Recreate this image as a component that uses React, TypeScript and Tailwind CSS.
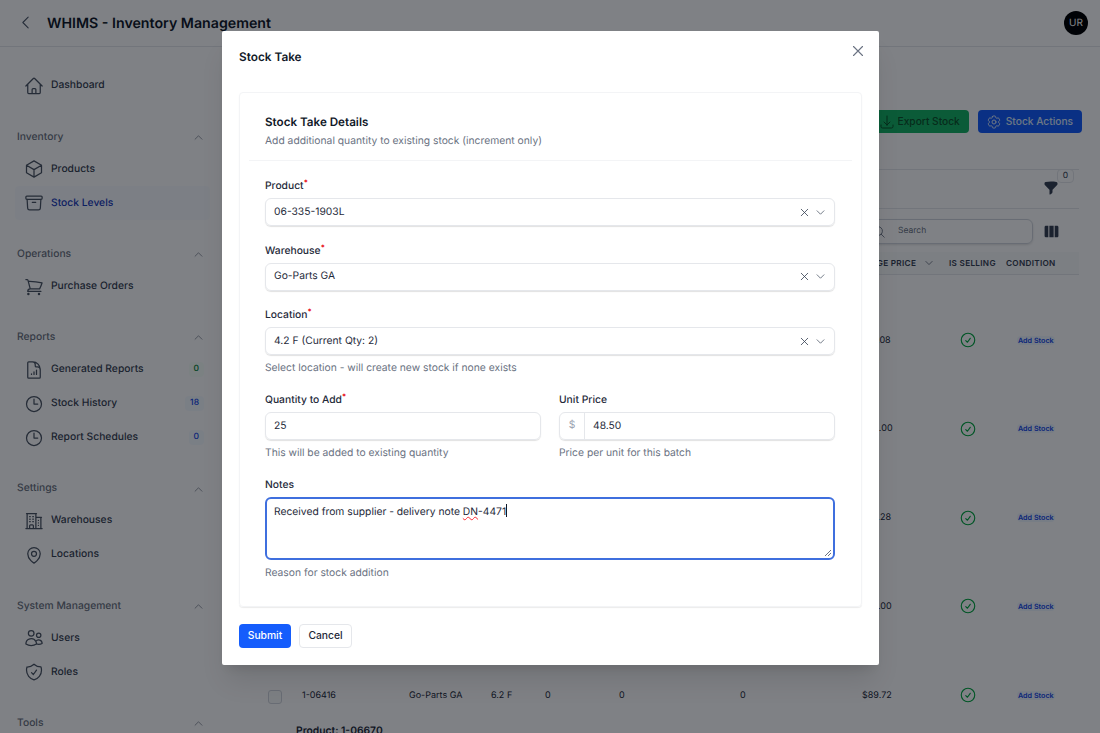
import {
  HiFunnel,
  HiOutlineArchiveBox,
  HiOutlineArrowDownTray,
  HiOutlineBuildingOffice2,
  HiOutlineCheckCircle,
  HiOutlineChevronDown,
  HiOutlineChevronLeft,
  HiOutlineChevronUp,
  HiOutlineClock,
  HiOutlineCog6Tooth,
  HiOutlineCube,
  HiOutlineDocumentChartBar,
  HiOutlineHome,
  HiOutlineMagnifyingGlass,
  HiOutlineMapPin,
  HiOutlineShieldCheck,
  HiOutlineShoppingCart,
  HiOutlineUsers,
  HiOutlineXMark,
  HiViewColumns,
} from "react-icons/hi2";
import type { IconType } from "react-icons";

type NavItem = { label: string; icon: IconType; badge?: string; badgeClass?: string; active?: boolean };

const sections: { title: string; items: NavItem[] }[] = [
  {
    title: "Inventory",
    items: [
      { label: "Products", icon: HiOutlineCube },
      { label: "Stock Levels", icon: HiOutlineArchiveBox, active: true },
    ],
  },
  { title: "Operations", items: [{ label: "Purchase Orders", icon: HiOutlineShoppingCart }] },
  {
    title: "Reports",
    items: [
      { label: "Generated Reports", icon: HiOutlineDocumentChartBar, badge: "0", badgeClass: "bg-green-50/60 text-green-700" },
      { label: "Stock History", icon: HiOutlineClock, badge: "18", badgeClass: "bg-blue-50/60 text-blue-700" },
      { label: "Report Schedules", icon: HiOutlineClock, badge: "0", badgeClass: "bg-blue-50/60 text-blue-700" },
    ],
  },
  {
    title: "Settings",
    items: [
      { label: "Warehouses", icon: HiOutlineBuildingOffice2 },
      { label: "Locations", icon: HiOutlineMapPin },
    ],
  },
  {
    title: "System Management",
    items: [
      { label: "Users", icon: HiOutlineUsers },
      { label: "Roles", icon: HiOutlineShieldCheck },
    ],
  },
  { title: "Tools", items: [] },
];

const rows = [
  { sku: "1-06120", location: "3.1 B", price: "$41.08" },
  { sku: "1-06233", location: "4.2 F", price: "$62.00" },
  { sku: "1-06301", location: "5.4 C", price: "$37.28" },
  { sku: "1-06388", location: "2.7 A", price: "$75.00" },
  { sku: "1-06416", location: "6.2 F", price: "$89.72" },
];

const tableCols = "grid grid-cols-[44px_107px_82px_54px_74px_121px_122px_97px_59px_1fr]";

function Sidebar() {
  return (
    <aside className="w-[222px] shrink-0 px-[17px] pt-[22px]">
      <a className="flex h-[34px] items-center gap-[7px] pl-[7px] text-[#374151]">
        <HiOutlineHome className="h-5 w-5 text-[#4b5563]" />
        <span className="text-[10.3px] font-medium">Dashboard</span>
      </a>
      {sections.map((section) => (
        <div key={section.title} className="mt-[19.25px]">
          <div className="flex h-[30px] items-center justify-between pr-[1.5px] text-[10.3px] font-medium text-[#6b7280]">
            {section.title}
            <HiOutlineChevronUp className="h-[11px] w-[11px]" />
          </div>
          {section.items.map((item) => (
            <a
              key={item.label}
              className={
                item.active
                  ? "-mx-[2px] -mr-[5px] flex h-[34px] items-center gap-[7px] rounded bg-blue-50/40 pl-[9px] text-blue-800"
                  : "flex h-[34px] items-center gap-[7px] pl-[7px] text-[#374151]"
              }
            >
              <item.icon className="h-5 w-5 text-[#4b5563]" />
              <span className="text-[10.3px] font-medium">{item.label}</span>
              {item.badge && (
                <span className={`ml-auto mr-[1px] rounded px-[5px] py-[1px] text-[8.5px] font-medium ${item.badgeClass}`}>
                  {item.badge}
                </span>
              )}
            </a>
          ))}
        </div>
      ))}
    </aside>
  );
}

function StockTable() {
  return (
    <main className="min-w-0 flex-1 pl-[36px] pr-[18px]">
      <div className="flex h-[122px] items-start justify-end gap-[9px] pt-[63px]">
        <button className="flex h-[23px] items-center gap-[3px] rounded bg-[#16b364] pl-2 pr-[9px] text-[10.2px] font-medium text-green-900">
          <HiOutlineArrowDownTray className="h-4 w-4" />
          Export Stock
        </button>
        <button className="flex h-[23px] items-center gap-1 rounded bg-blue-600 pl-2 pr-[9px] text-[10.2px] font-medium text-blue-100">
          <HiOutlineCog6Tooth className="h-4 w-4" />
          Stock Actions
        </button>
      </div>
      <div className="mr-[3px] border-t border-gray-200">
        <div className="flex h-[39px] items-center justify-end border-b border-gray-200 pb-[3px] pr-5">
          <div className="relative">
            <HiFunnel className="h-4 w-4 text-gray-700" />
            <span className="absolute -right-[15px] -top-[11px] rounded border border-gray-200 px-[5px] text-[8.5px] text-gray-700">
              0
            </span>
          </div>
        </div>
        <div className="flex h-[43px] items-center justify-end gap-[10px] pr-[19px] pt-[2px]">
          <div className="flex h-[25px] w-[170px] items-center gap-[12px] rounded-md border border-gray-300 pl-2 text-[8.5px] text-gray-500 shadow-sm">
            <HiOutlineMagnifyingGlass className="h-[14px] w-[14px]" />
            <span>Search</span>
          </div>
          <HiViewColumns className="h-[17px] w-[17px] text-gray-700" />
        </div>
        <div className={`${tableCols} h-[23px] items-center border-b border-gray-200 bg-gray-50 text-[8.2px] font-semibold tracking-[0.3px] text-gray-700`}>
          <span />
          <span>SKU</span>
          <span>WAREHOUSE</span>
          <span>LOCATION</span>
          <span>QTY</span>
          <span>RESERVED</span>
          <span>AVAILABLE</span>
          <span className="-ml-[14px] flex items-center gap-2 whitespace-nowrap">
            AVERAGE PRICE
            <HiOutlineChevronDown className="h-[10px] w-[10px]" />
          </span>
          <span className="-ml-[10px] whitespace-nowrap">IS SELLING</span>
          <span className="-ml-3">CONDITION</span>
        </div>
        {rows.map((row, i) => (
          <div
            key={row.sku}
            className={`${tableCols} items-end pb-[3px] text-[9px] text-gray-800 ${i === 0 ? "h-[76px]" : "h-[88.75px]"}`}
          >
            <span className="mb-[-1px] mr-5 h-[14px] w-[14px] justify-self-end rounded-[3px] border border-gray-300 bg-gray-50" />
            <span className="pb-[1px]">{row.sku}</span>
            <span className="pb-[1px]">Go-Parts GA</span>
            <span className="pb-[1px]">{row.location}</span>
            <span className="pb-[1px]">0</span>
            <span className="pb-[1px]">0</span>
            <span className="pb-[1px]">0</span>
            <span className="pb-[1px]">{row.price}</span>
            <span className="-mb-px">
              <HiOutlineCheckCircle className="h-[18px] w-[18px] text-green-600" />
            </span>
            <span className="-ml-px pb-[1px]">
              <span className="rounded-sm bg-blue-50 px-[1px] text-[7.2px] font-semibold text-blue-700">Add Stock</span>
            </span>
          </div>
        ))}
        <div className="pl-[38px] pt-[18px] text-[10.3px] font-semibold leading-[14px] text-gray-800">Product: 1-06670</div>
      </div>
    </main>
  );
}

function FieldLabel({ label, required }: { label: string; required?: boolean }) {
  return (
    <div className="mb-[5px] h-[14px] text-[10.3px] font-medium leading-[14px] text-gray-800">
      {label}
      {required && <sup className="text-[7.5px] font-bold text-red-600">*</sup>}
    </div>
  );
}

function Help({ children }: { children: string }) {
  return <p className="mb-[0.5px] mt-[6px] text-[10.3px] leading-[14px] text-gray-500">{children}</p>;
}

function SelectField({ label, value }: { label: string; value: string }) {
  return (
    <div>
      <FieldLabel label={label} required />
      <div className="flex h-[28px] items-center rounded-md border border-gray-200 pl-2 pr-2 text-[10.3px] text-gray-800 shadow-[0_1px_1px_rgba(0,0,0,0.12)]">
        <span className="flex-1 pt-px">{value}</span>
        <HiOutlineXMark className="mr-1 h-[13px] w-[13px] text-gray-700" />
        <HiOutlineChevronDown className="h-[11px] w-[11px] text-gray-700" />
      </div>
    </div>
  );
}

function StockTakeModal() {
  return (
    <div className="absolute left-[222px] top-[31px] h-[634px] w-[657px] rounded-[2px] bg-white px-[17px] pt-[17px] shadow-xl">
      <div className="flex h-[18px] items-center justify-between">
        <h2 className="pt-px text-[11.8px] font-semibold text-gray-900">Stock Take</h2>
        <HiOutlineXMark className="-mr-[5px] -mt-[12px] h-[18px] w-[18px] text-gray-500" />
      </div>
      <section className="mt-[26px] h-[515px] rounded border border-gray-100 shadow-[0_1px_1px_rgba(0,0,0,0.08)]">
        <div className="mx-[9px] h-[68px] border-b border-gray-100 pl-4 pr-[17px] pt-[21px]">
          <h3 className="text-[11.65px] font-semibold leading-[16px] text-gray-900">Stock Take Details</h3>
          <p className="mt-1 text-[10.3px] leading-[14px] text-gray-500">
            Add additional quantity to existing stock (increment only)
          </p>
        </div>
        <div className="ml-[25px] mr-[26px] flex flex-col gap-[17.5px] pt-[18px]">
          <SelectField label="Product" value="06-335-1903L" />
          <SelectField label="Warehouse" value="Go-Parts GA" />
          <div>
            <SelectField label="Location" value="4.2 F (Current Qty: 2)" />
            <Help>Select location - will create new stock if none exists</Help>
          </div>
          <div className="grid grid-cols-2 gap-[18px]">
            <div>
              <FieldLabel label="Quantity to Add" required />
              <div className="flex h-[28px] items-center rounded-md border border-gray-200 px-2 pt-px text-[10.3px] text-gray-800 shadow-[0_1px_1px_rgba(0,0,0,0.12)]">
                25
              </div>
              <Help>This will be added to existing quantity</Help>
            </div>
            <div>
              <FieldLabel label="Unit Price" />
              <div className="flex h-[28px] items-center rounded-md border border-gray-200 text-[10.3px] text-gray-800 shadow-[0_1px_1px_rgba(0,0,0,0.12)]">
                <span className="flex h-full w-[25px] items-center justify-center border-r border-gray-200 text-gray-400">$</span>
                <span className="pl-2 pt-px">48.50</span>
              </div>
              <Help>Price per unit for this batch</Help>
            </div>
          </div>
          <div>
            <FieldLabel label="Notes" />
            <div className="relative h-[63px] rounded-md border-2 border-[#3f6fde] px-[7px] pt-[3px] text-[10.3px] leading-[16px] text-gray-800">
              Received from supplier - delivery note{" "}
              <span className="underline decoration-red-500 decoration-wavy decoration-1">DN</span>-4471
              <span className="inline-block h-[13px] w-px translate-y-[2px] bg-gray-900" />
              <svg viewBox="0 0 8 8" className="absolute bottom-[1px] right-[1px] h-2 w-2 text-gray-500">
                <path d="M7 1 1 7M7 4 4 7" fill="none" stroke="currentColor" strokeWidth="1" />
              </svg>
            </div>
            <Help>Reason for stock addition</Help>
          </div>
        </div>
      </section>
      <div className="mt-[17px] flex gap-2">
        <button className="h-[24px] w-[52px] rounded bg-blue-600 text-[10.3px] font-medium text-white">Submit</button>
        <button className="h-[24px] w-[53px] rounded border border-gray-200 text-[10.3px] font-medium text-gray-800">
          Cancel
        </button>
      </div>
    </div>
  );
}

export default function App() {
  return (
    <div className="relative h-screen w-full overflow-hidden bg-white font-['Inter',sans-serif] [text-rendering:geometricPrecision]">
      <header className="flex h-[47px] items-center justify-between border-b border-gray-200 pl-[17px] pr-[12px]">
        <div className="flex items-center gap-[13px]">
          <HiOutlineChevronLeft className="h-[17px] w-[17px] text-gray-600" />
          <h1 className="pt-px text-[14.2px] font-semibold text-gray-900">WHIMS - Inventory Management</h1>
        </div>
        <div className="flex h-6 w-6 items-center justify-center rounded-full bg-black text-[10px] text-white">UR</div>
      </header>
      <div className="flex">
        <Sidebar />
        <StockTable />
      </div>
      {/* overlay */}
      <div className="absolute inset-0 bg-[#00030c]/50" />
      <StockTakeModal />
    </div>
  );
}
